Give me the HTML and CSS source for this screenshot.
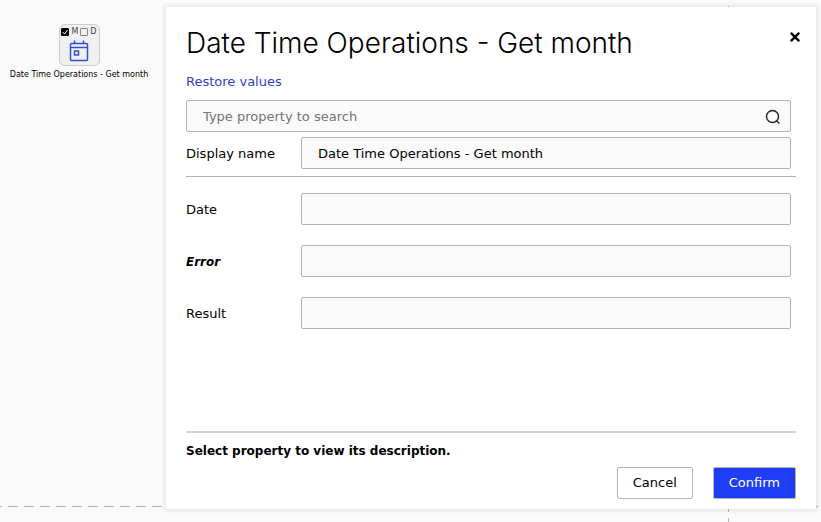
FILE: index.html
```html
<!DOCTYPE html>
<html lang="en">
<head>
    <meta charset="UTF-8">
    <meta name="viewport" content="width=device-width, initial-scale=1.0">
    <title>Date Time Operations - Get month</title>
    <link rel="stylesheet" href="styles.css">
</head>
<body>

<main class="canvas">
    <div class="guide guide-horizontal"></div>
    <div class="guide guide-vertical"></div>

    <div class="node">
        <div class="node-box">
            <div class="node-flags">
                <input type="checkbox" id="flagM" checked>
                <label for="flagM">M</label>
                <input type="checkbox" id="flagD">
                <label for="flagD">D</label>
            </div>
            <svg class="node-icon" viewBox="0 0 20 22" fill="none" stroke="#3050e0" stroke-width="1.5">
                <rect x="1.5" y="3.5" width="17" height="17" rx="1"/>
                <path d="M1.5 7.5h17M5.5 0.5v3M14.5 0.5v3"/>
                <rect x="5.5" y="11" width="4" height="4"/>
            </svg>
        </div>
        <span class="node-name">Date Time Operations - Get month</span>
    </div>

    <section class="dialog" role="dialog" aria-labelledby="dialogTitle">
        <header class="dialog-header">
            <h1 id="dialogTitle">Date Time Operations - Get month</h1>
            <button type="button" class="close-button" aria-label="Close">
                <svg viewBox="0 0 10 10" stroke="#000" stroke-width="2.4">
                    <path d="M0.8 0.8l8.4 8.4M9.2 0.8l-8.4 8.4"/>
                </svg>
            </button>
        </header>

        <a class="restore" href="#">Restore values</a>

        <form class="properties" id="propertiesForm">
            <div class="search">
                <input type="text" placeholder="Type property to search" aria-label="Type property to search">
                <svg class="search-icon" viewBox="0 0 16 16" fill="none" stroke="#222" stroke-width="1.4">
                    <circle cx="7.5" cy="7.5" r="6"/>
                    <path d="M11 11.2l3.4 3.4"/>
                </svg>
            </div>
            <div class="row">
                <label for="displayName">Display name</label>
                <input type="text" id="displayName" value="Date Time Operations - Get month">
            </div>
            <div class="fields">
                <div class="row">
                    <label for="date">Date</label>
                    <input type="text" id="date">
                </div>
                <div class="row">
                    <label for="error" class="output">Error</label>
                    <input type="text" id="error">
                </div>
                <div class="row">
                    <label for="result">Result</label>
                    <input type="text" id="result">
                </div>
            </div>
        </form>

        <footer class="dialog-footer">
            <p class="description">Select property to view its description.</p>
            <div class="actions">
                <button type="button" class="button">Cancel</button>
                <button type="submit" class="button primary" form="propertiesForm">Confirm</button>
            </div>
        </footer>
    </section>
</main>

</body>
</html>
```

FILE: styles.css
```css
* {
    box-sizing: border-box;
}

body {
    margin: 0;
    background-color: #fafafa;
    color: #000;
    font-family: Verdana, "DejaVu Sans", sans-serif;
    font-size: 13px;
    line-height: 16px;
}

input,
button {
    font: inherit;
    color: inherit;
}

.canvas {
    position: relative;
    display: flex;
    min-height: 100vh;
    padding: 7px 5px 13px 0;
    overflow: hidden;
}

/* Dashed page guides behind the dialog */
.guide {
    position: absolute;
}

.guide-horizontal {
    left: 0;
    right: 0;
    bottom: 15px;
    height: 1px;
    background: repeating-linear-gradient(90deg, #b5b5b5 0 2px, transparent 2px 8px, #b5b5b5 8px 16px);
}

.guide-vertical {
    top: 6px;
    bottom: 0;
    right: 92px;
    width: 1px;
    background: repeating-linear-gradient(#b5b5b5 0 10px, transparent 10px 16px);
}

/* Activity node */
.node {
    display: flex;
    flex-direction: column;
    align-items: center;
    flex: 0 0 158px;
    margin-right: 8px;
    padding-top: 17px;
}

.node-box {
    display: flex;
    flex-direction: column;
    align-items: center;
    width: 41px;
    height: 42px;
    padding-top: 2px;
    border: 1px solid #ccc;
    border-radius: 6px;
    background-color: #f0f0f0;
}

.node-flags {
    display: flex;
    align-items: center;
    gap: 2px;
    height: 10px;
    font-size: 8px;
    line-height: 12px;
    color: #444;
}

.node-flags input {
    appearance: none;
    flex: none;
    width: 8px;
    height: 8px;
    margin: 0;
    border: 1px solid #888;
    border-radius: 1px;
}

.node-flags input:checked {
    border-color: #000;
    background: #000 url("data:image/svg+xml,%3Csvg xmlns='http://www.w3.org/2000/svg' viewBox='0 0 6 6'%3E%3Cpath d='M.5 3l2 2 3-4' fill='none' stroke='white'/%3E%3C/svg%3E") center no-repeat;
}

.node-icon {
    width: 20px;
    height: 22px;
    margin-top: 3px;
}

.node-name {
    margin-top: 3px;
    font-size: 8px;
    line-height: 12px;
    white-space: nowrap;
}

/* Properties dialog */
.dialog {
    position: relative;
    display: flex;
    flex-direction: column;
    flex: 1;
    min-width: 0;
    padding: 20px 20px 10px;
    background-color: #fff;
    box-shadow: 0 0 4px 2px rgba(0, 0, 0, 0.08);
}

.dialog-header {
    display: flex;
    justify-content: space-between;
    align-items: flex-start;
}

h1 {
    margin: 0;
    font-family: Inter, sans-serif;
    font-size: 28px;
    font-weight: 300;
    line-height: 32px;
}

.close-button {
    display: flex;
    align-items: center;
    justify-content: center;
    width: 10px;
    height: 20px;
    margin-right: -4px;
    padding: 0;
    border: none;
    background: none;
    cursor: pointer;
}

.close-button svg {
    flex: none;
    width: 10px;
    height: 10px;
}

.restore {
    align-self: flex-start;
    margin-top: 15px;
    color: #2f3fc4;
    text-decoration: none;
}

.properties {
    margin-top: 10px;
}

.properties input {
    width: 100%;
    height: 32px;
    padding: 0 16px;
    border: 1px solid #b3b3b3;
    border-radius: 2px;
    background-color: #fafafa;
}

.properties input::placeholder {
    color: #757575;
    opacity: 1;
}

.search {
    position: relative;
    margin: 0 5px 5px 0;
}

.search-icon {
    position: absolute;
    top: 9px;
    right: 10px;
    width: 16px;
    height: 16px;
}

.row {
    display: grid;
    grid-template-columns: 115px 1fr;
    align-items: center;
    padding-right: 5px;
}

.row label {
    line-height: 18px;
    padding-top: 2px;
}

.output {
    font-style: italic;
    font-weight: bold;
    font-size: 12px;
}

.fields {
    display: grid;
    gap: 20px;
    margin-top: 7px;
    padding-top: 16px;
    border-top: 1px solid #b3b3b3;
}

.dialog-footer {
    margin-top: auto;
    border-top: 2px solid #d3d3d3;
}

.description {
    margin: 10px 0 8px;
    font-size: 12px;
    font-weight: bold;
}

.actions {
    display: flex;
    justify-content: flex-end;
    gap: 20px;
}

.button {
    height: 32px;
    padding: 0 15px;
    border: 1px solid #b3b3b3;
    border-radius: 2px;
    background-color: #fff;
    cursor: pointer;
}

.primary {
    background-color: #1f3df5;
    color: #fff;
}
```
